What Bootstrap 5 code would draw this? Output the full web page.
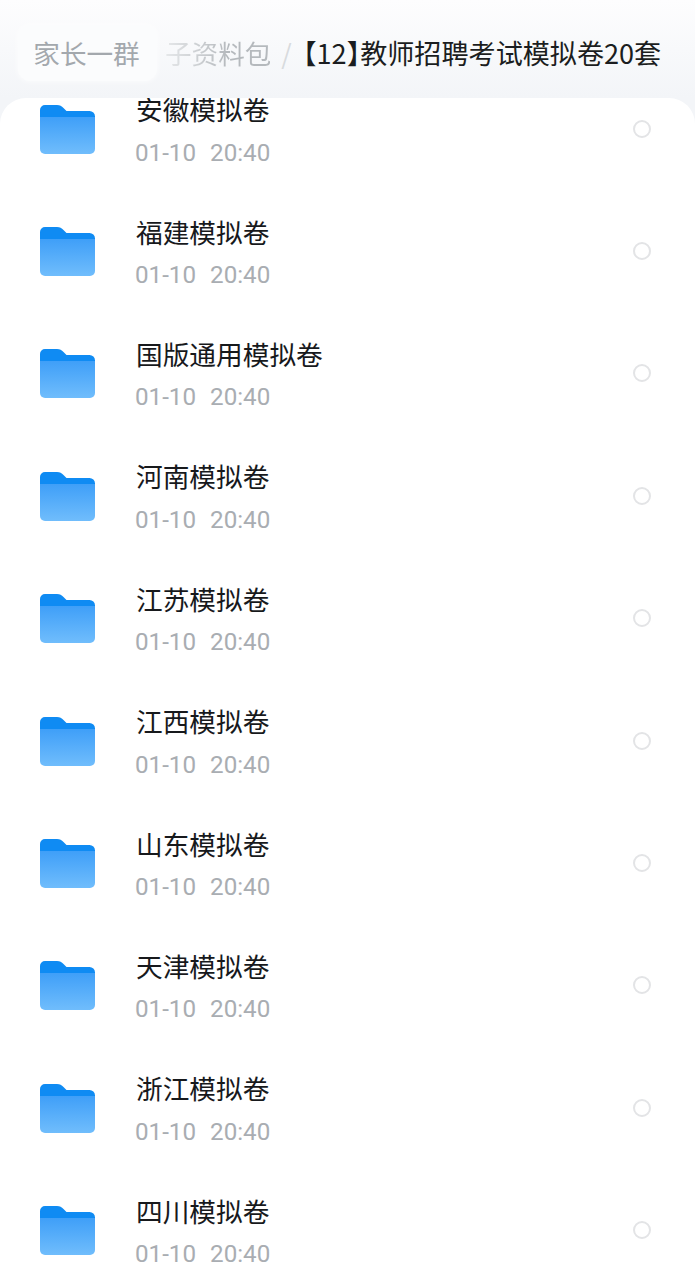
<!DOCTYPE html>
<html lang="zh">
<head>
    <meta charset="UTF-8">
    <meta name="viewport" content="width=device-width, initial-scale=1.0">
    <title>教师招聘考试模拟卷</title>
    <link href="https://cdn.jsdelivr.net/npm/bootstrap@5.3.0/dist/css/bootstrap.min.css" rel="stylesheet">
    <style>
        html, body {
            height: 1280px;
            overflow: hidden;
        }
        body {
            background: linear-gradient(#fdfdfe, #f3f5f8 98px);
            font-family: "Noto Sans CJK SC", "Noto Sans", sans-serif;
        }
        .crumb-bar {
            height: 98px;
            padding: 25px 0 17px 18px;
            font-size: 26.6px;
            line-height: 56px;
            white-space: nowrap;
        }
        .crumb-chip {
            width: 139px;
            height: 56px;
            padding-right: 2px;
            background: #fbfcfd;
            border-radius: 12px;
            color: #a3a8ad;
            text-align: center;
            box-shadow: 0 0 6px rgba(255, 255, 255, .8);
        }
        .crumb-fade {
            margin-left: 8px;
            width: 105px;
            color: transparent;
            background: linear-gradient(90deg, #e6e8ea, #b5b9bd 60%);
            -webkit-background-clip: text;
            background-clip: text;
        }
        .crumb-sep {
            width: 33px;
            text-align: center;
            color: #d8dbde;
        }
        .crumb-now {
            color: #1b1d20;
            font-size: 27.1px;
        }
        .crumb-bracket {
            font-feature-settings: "halt";
        }
        .file-panel {
            height: 1182px;
            background: #fff;
            border-radius: 26px 26px 0 0;
            overflow: hidden;
        }
        .file-list {
            margin-top: -30px;
        }
        .file-row {
            height: 122.4px;
            padding-left: 40px;
            padding-right: 44px;
        }
        .file-icon {
            width: 55px;
            height: 50px;
            flex: none;
            margin-right: 41px;
            margin-top: 1px;
        }
        .file-name {
            font-size: 26.7px;
            line-height: 40px;
            color: #17191c;
            margin-top: 3.5px;
        }
        .file-time {
            font-family: Roboto, "Noto Sans", sans-serif;
            font-size: 24.2px;
            line-height: 40px;
            word-spacing: 1px;
            color: #a9adb2;
            margin-top: 3.5px;
            margin-left: -1px;
            white-space: pre;
        }
        .file-check {
            width: 18px;
            height: 18px;
            flex: none;
            border: 2px solid #e3e4e6;
            border-radius: 50%;
            margin-bottom: 1px;
        }
    </style>
</head>
<body>
    <div class="crumb-bar d-flex">
        <div class="crumb-chip">家长一群</div>
        <div class="crumb-fade">子资料包</div>
        <div class="crumb-sep">/</div>
        <div class="crumb-now"><span class="crumb-bracket">【</span>12<span class="crumb-bracket">】</span>教师招聘考试模拟卷20套</div>
    </div>

    <div class="file-panel">
        <div class="file-list" id="fileList"></div>
    </div>

    <svg width="0" height="0" class="d-block">
        <defs>
            <linearGradient id="folderFront" x1="0" y1="0" x2="0" y2="1">
                <stop offset="0" stop-color="#3f9ff8"/>
                <stop offset="1" stop-color="#70bdfc"/>
            </linearGradient>
        </defs>
    </svg>

    <script>
        const folders = ['安徽模拟卷', '福建模拟卷', '国版通用模拟卷', '河南模拟卷', '江苏模拟卷', '江西模拟卷', '山东模拟卷', '天津模拟卷', '浙江模拟卷', '四川模拟卷'];

        const folderIcon = `
            <svg class="file-icon" viewBox="0 0 55 50">
                <path d="M0 5a5 5 0 0 1 5-5h12c3 0 4.500 1 6.500 3l3 3h23a5.500 5.500 0 0 1 5.500 5.500V30H0z" fill="#0f8bf3"/>
                <path d="M0 12h55v32a5 5 0 0 1-5 5H5a5 5 0 0 1-5-5z" fill="url(#folderFront)"/>
            </svg>`;

        document.getElementById('fileList').innerHTML = folders.map(name => `
            <div class="file-row d-flex align-items-center">
                ${folderIcon}
                <div class="flex-grow-1">
                    <div class="file-name">${name}</div>
                    <div class="file-time">01-10  20:40</div>
                </div>
                <div class="file-check"></div>
            </div>
        `).join('');
    </script>

    <script src="https://cdn.jsdelivr.net/npm/bootstrap@5.3.0/dist/js/bootstrap.bundle.min.js"></script>
</body>
</html>
